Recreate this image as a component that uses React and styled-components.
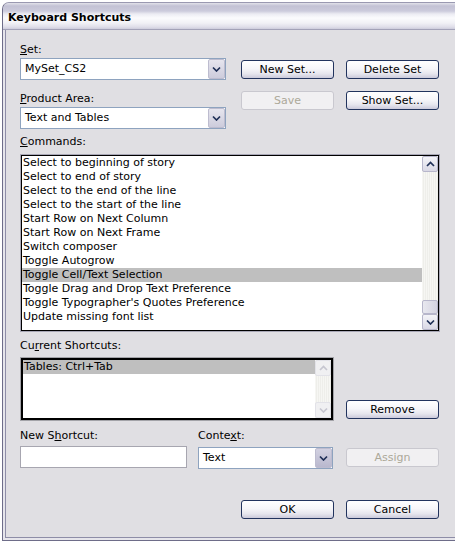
import React from "react";
import styled, { createGlobalStyle } from "styled-components";

const commands = [
  "Select to beginning of story",
  "Select to end of story",
  "Select to the end of the line",
  "Select to the start of the line",
  "Start Row on Next Column",
  "Start Row on Next Frame",
  "Switch composer",
  "Toggle Autogrow",
  "Toggle Cell/Text Selection",
  "Toggle Drag and Drop Text Preference",
  "Toggle Typographer's Quotes Preference",
  "Update missing font list",
];

function Chevron({ up, disabled }) {
  return (
    <svg width="9" height="6" viewBox="0 0 9 6">
      <polyline
        points={up ? "1,5 4.5,1.5 8,5" : "1,1.5 4.5,5 8,1.5"}
        fill="none"
        stroke={disabled ? "#c6c6d0" : "#1f2f57"}
        strokeWidth="1.7"
      />
    </svg>
  );
}

function Scrollbar({ disabled, thumb }) {
  return (
    <ScrollColumn>
      <ScrollButton $disabled={disabled}>
        <Chevron up disabled={disabled} />
      </ScrollButton>
      <ScrollTrack>{thumb && <ScrollThumb />}</ScrollTrack>
      <ScrollButton $disabled={disabled}>
        <Chevron disabled={disabled} />
      </ScrollButton>
    </ScrollColumn>
  );
}

function Dropdown({ value, width, focused }) {
  return (
    <Select $width={width}>
      <SelectValue>{value}</SelectValue>
      <DropButton $focused={focused}>
        <Chevron />
      </DropButton>
    </Select>
  );
}

function App() {
  return (
    <>
      <GlobalStyle />
      <Window>
        <TitleBar>Keyboard Shortcuts</TitleBar>
        <Body>
          <TopRow>
            <LeftCol>
              <Label>
                <u>S</u>et:
              </Label>
              <Dropdown value="MySet_CS2" width={206} />
              <Label $mt={12}>
                <u>P</u>roduct Area:
              </Label>
              <Dropdown value="Text and Tables" width={206} />
            </LeftCol>
            <ButtonGrid>
              <Button>New Set...</Button>
              <Button>Delete Set</Button>
              <Button disabled>Save</Button>
              <Button>Show Set...</Button>
            </ButtonGrid>
          </TopRow>

          <Label $mt={6}>
            <u>C</u>ommands:
          </Label>
          <CommandList>
            <Rows>
              {commands.map((c) => (
                <Row key={c} $selected={c === "Toggle Cell/Text Selection"}>
                  {c}
                </Row>
              ))}
            </Rows>
            <Scrollbar thumb />
          </CommandList>

          <ShortcutRow>
            <div>
              <Label $mt={8}>
                Cu<u>r</u>rent Shortcuts:
              </Label>
              <ShortcutList>
                <Rows>
                  <Row $selected>Tables: Ctrl+Tab</Row>
                </Rows>
                <Scrollbar disabled />
              </ShortcutList>
            </div>
            <RemoveButton>Remove</RemoveButton>
          </ShortcutRow>

          <FieldGrid>
            <Label>
              New S<u>h</u>ortcut:
            </Label>
            <Label>
              Conte<u>x</u>t:
            </Label>
            <span />
            <TextInput />
            <Dropdown value="Text" width={135} focused />
            <Button disabled>Assign</Button>
          </FieldGrid>

          <Footer>
            <Button>OK</Button>
            <Button>Cancel</Button>
          </Footer>
        </Body>
      </Window>
    </>
  );
}

export default App;

const GlobalStyle = createGlobalStyle`
  html, body {
    margin: 0;
    padding: 0;
    background: #fff;
    overflow: hidden;
  }
  body {
    font-family: "DejaVu Sans", Verdana, sans-serif;
    font-size: 11px;
    color: #000;
  }
`;

const Window = styled.div`
  margin: 2px 0 0 2px;
  width: 470px;
  border: 1px solid #6e6d89;
  border-top-color: #9a99b1;
  border-radius: 7px 7px 0 0;
  background: #e0dfe3;
  box-shadow: inset 0 0 0 2px #e6e5eb, inset 0 0 0 3px #8e8da7;
`;

const TitleBar = styled.div`
  height: 27px;
  padding: 3px 0 0 5px;
  box-sizing: border-box;
  display: flex;
  align-items: center;
  font-weight: bold;
  font-size: 11px;
  border-radius: 6px 6px 0 0;
  border-bottom: 1px solid #a3a2b8;
  background: linear-gradient(
    to bottom,
    #e2e2ea 0px,
    #c3c2d5 3px,
    #cccbdc 8px,
    #ececf3 11px,
    #fbfbfd 15px,
    #f1f1f6 20px,
    #dfdee9 24px,
    #c4c3d5 27px
  );
`;

const Body = styled.div`
  width: 420px;
  padding: 13px 0 21px 17px;
`;

const Label = styled.div`
  line-height: 14px;
  margin-top: ${(p) => p.$mt || 0}px;
  white-space: nowrap;

  u {
    text-decoration-thickness: 1px;
    text-underline-offset: 1px;
  }
`;

const TopRow = styled.div`
  display: flex;
  gap: 15px;
`;

const LeftCol = styled.div`
  display: flex;
  flex-direction: column;
`;

const ButtonGrid = styled.div`
  display: grid;
  grid-template-columns: 93px 93px;
  gap: 12px;
  margin-top: 17px;
  align-self: flex-start;
`;

const Button = styled.button`
  width: 93px;
  height: 19px;
  padding: 0;
  font-family: inherit;
  font-size: 11px;
  color: ${(p) => (p.disabled ? "#aca899" : "#000")};
  border: 1px solid ${(p) => (p.disabled ? "#c9c8cf" : "#22345e")};
  border-radius: 3px;
  background: ${(p) =>
    p.disabled
      ? "#f1f0f2"
      : "linear-gradient(to bottom, #ffffff 0%, #f6f6f9 45%, #e6e6ee 75%, #cbcadb 100%)"};
`;

const RemoveButton = styled(Button)`
  margin-bottom: 2px;
`;

const Select = styled.div`
  width: ${(p) => p.$width}px;
  height: 22px;
  margin-top: 1px;
  box-sizing: border-box;
  border: 1px solid #8ea3bf;
  background: #fff;
  display: flex;
  align-items: stretch;
`;

const SelectValue = styled.div`
  flex: 1;
  padding-left: 4px;
  line-height: 20px;
  white-space: nowrap;
`;

const DropButton = styled.div`
  width: 17px;
  box-sizing: border-box;
  border: 1px solid #bdbccf;
  border-radius: 2px;
  background: ${(p) =>
    p.$focused
      ? "linear-gradient(to bottom, #d2d1e1, #b9b8ce)"
      : "linear-gradient(to bottom, #e6e5ee, #cdccdc)"};
  display: flex;
  align-items: center;
  justify-content: center;
`;

const CommandList = styled.div`
  margin: 6px 1px 0 1px;
  height: 174px;
  border: 1px solid #000;
  box-shadow: 0 0 0 1px #a8a7b6;
  background: #fff;
  display: flex;
`;

const Rows = styled.div`
  flex: 1;
  overflow: hidden;
`;

const Row = styled.div`
  height: 14px;
  line-height: 14px;
  padding-left: 1px;
  white-space: nowrap;
  background: ${(p) => (p.$selected ? "#bfbfbf" : "transparent")};
`;

const ScrollColumn = styled.div`
  width: 16px;
  display: flex;
  flex-direction: column;
  background: #f4f4f1;
`;

const ScrollButton = styled.div`
  height: 16px;
  box-sizing: border-box;
  border: 1px solid ${(p) => (p.$disabled ? "#e2e2e8" : "#b7b6cb")};
  border-radius: 2px;
  background: ${(p) =>
    p.$disabled
      ? "#f0f0f2"
      : "linear-gradient(to bottom, #f4f4f8, #d9d8e5)"};
  display: flex;
  align-items: center;
  justify-content: center;
`;

const ScrollTrack = styled.div`
  flex: 1;
  display: flex;
  flex-direction: column;
  justify-content: flex-end;
  background: repeating-linear-gradient(
    to right,
    #f6f6f3 0px,
    #f6f6f3 1px,
    #eeeeea 1px,
    #eeeeea 2px
  );
`;

const ScrollThumb = styled.div`
  height: 14px;
  box-sizing: border-box;
  border: 1px solid #b7b6cb;
  border-radius: 2px;
  background: linear-gradient(to right, #e8e8ef, #d4d3e1);
`;

const ShortcutRow = styled.div`
  display: flex;
  align-items: flex-end;
  gap: 12px;
`;

const ShortcutList = styled.div`
  width: 308px;
  height: 58px;
  margin: 5px 1px 1px 1px;
  border: 2px solid #000;
  box-shadow: 0 0 0 1px #a3a3a8;
  background: #fff;
  display: flex;
`;

const FieldGrid = styled.div`
  display: grid;
  grid-template-columns: 178px 148px 93px;
  grid-template-rows: 14px 22px;
  row-gap: 3px;
  align-items: center;
  margin-top: 8px;
`;

const TextInput = styled.div`
  width: 167px;
  height: 22px;
  box-sizing: border-box;
  border: 1px solid #a7a6b0;
  background: #fff;
`;

const Footer = styled.div`
  display: flex;
  justify-content: flex-end;
  gap: 12px;
  margin-top: 32px;
  padding-right: 1px;
`;
